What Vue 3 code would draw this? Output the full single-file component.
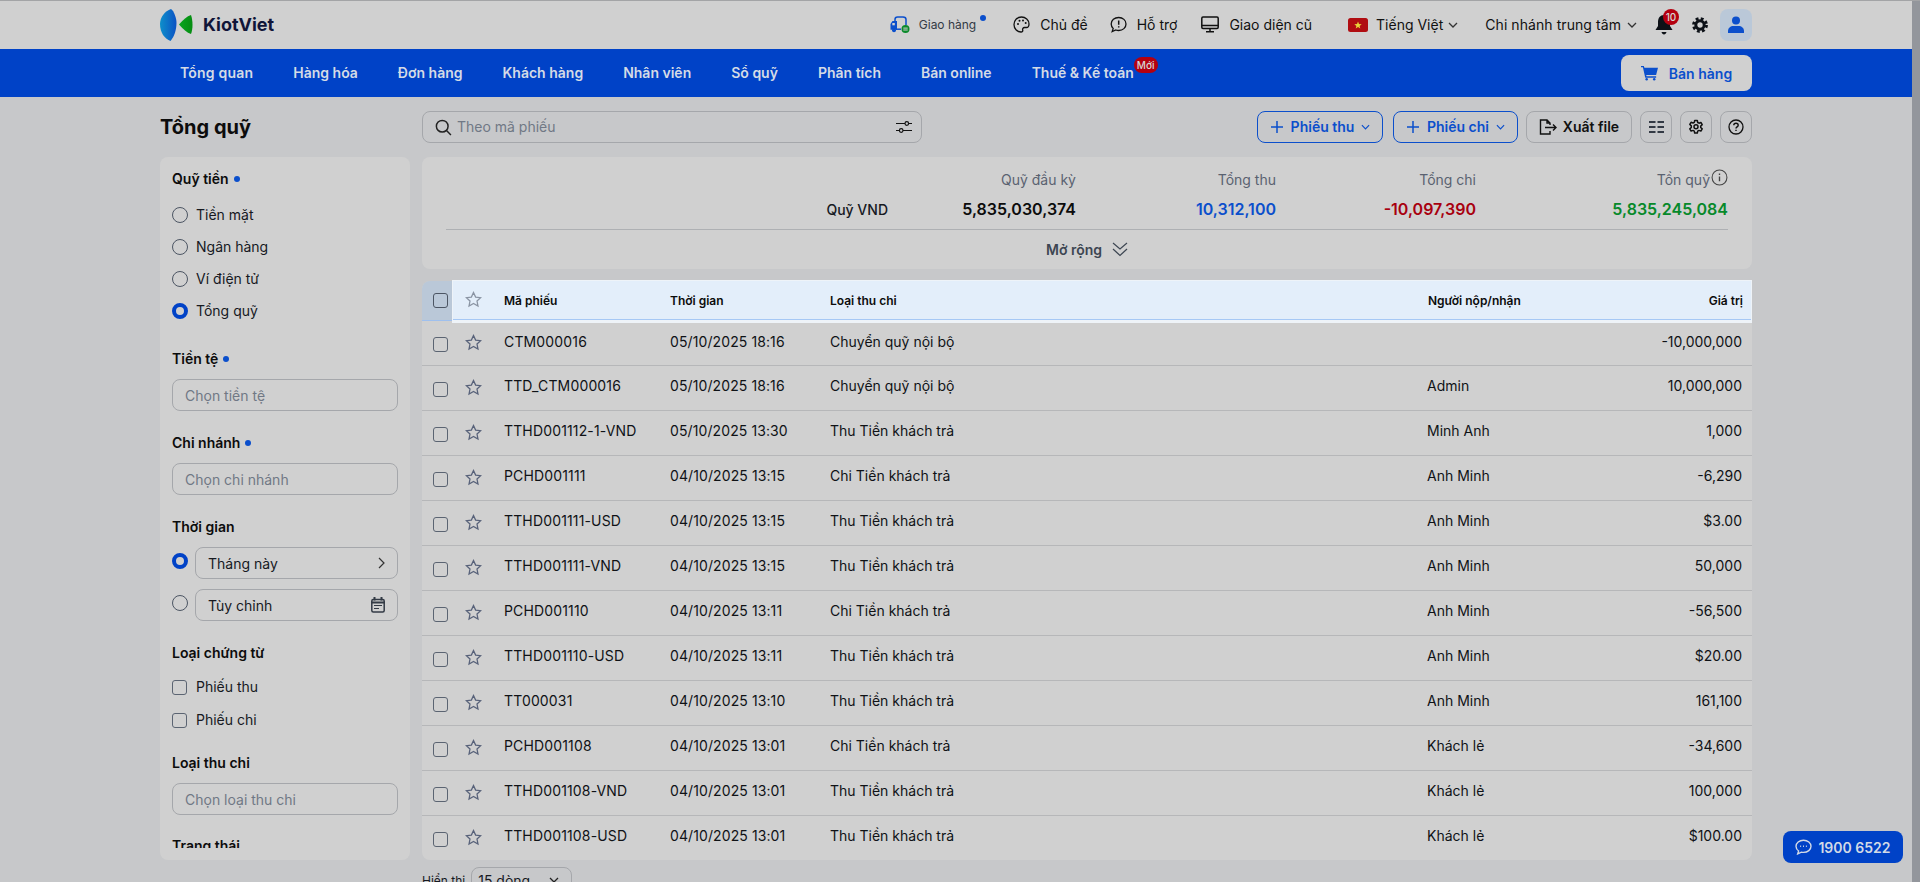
<script setup>
const nav = ['Tổng quan', 'Hàng hóa', 'Đơn hàng', 'Khách hàng', 'Nhân viên', 'Sổ quỹ', 'Phân tích', 'Bán online']
const rows = [
  ['CTM000016', '05/10/2025 18:16', 'Chuyển quỹ nội bộ', '', '-10,000,000'],
  ['TTD_CTM000016', '05/10/2025 18:16', 'Chuyển quỹ nội bộ', 'Admin', '10,000,000'],
  ['TTHD001112-1-VND', '05/10/2025 13:30', 'Thu Tiền khách trả', 'Minh Anh', '1,000'],
  ['PCHD001111', '04/10/2025 13:15', 'Chi Tiền khách trả', 'Anh Minh', '-6,290'],
  ['TTHD001111-USD', '04/10/2025 13:15', 'Thu Tiền khách trả', 'Anh Minh', '$3.00'],
  ['TTHD001111-VND', '04/10/2025 13:15', 'Thu Tiền khách trả', 'Anh Minh', '50,000'],
  ['PCHD001110', '04/10/2025 13:11', 'Chi Tiền khách trả', 'Anh Minh', '-56,500'],
  ['TTHD001110-USD', '04/10/2025 13:11', 'Thu Tiền khách trả', 'Anh Minh', '$20.00'],
  ['TT000031', '04/10/2025 13:10', 'Thu Tiền khách trả', 'Anh Minh', '161,100'],
  ['PCHD001108', '04/10/2025 13:01', 'Chi Tiền khách trả', 'Khách lẻ', '-34,600'],
  ['TTHD001108-VND', '04/10/2025 13:01', 'Thu Tiền khách trả', 'Khách lẻ', '100,000'],
  ['TTHD001108-USD', '04/10/2025 13:01', 'Thu Tiền khách trả', 'Khách lẻ', '$100.00'],
]
const funds = ['Tiền mặt', 'Ngân hàng', 'Ví điện tử', 'Tổng quỹ']
const starPath = 'M8 1.400l2 4.300 4.700.6-3.400 3.200.9 4.600L8 11.800l-4.200 2.300.9-4.600L1.300 6.300l4.700-.6z'
</script>

<template>
  <div class="page">
    <header class="top">
      <div class="wrap top-in">
        <div class="logo">
          <svg width="33" height="32" viewBox="0 0 33 32">
            <defs>
              <linearGradient id="lb" x1="0" x2="1" y1="0" y2="0">
                <stop offset="0" stop-color="#0e8fca" />
                <stop offset="1" stop-color="#0b52c4" />
              </linearGradient>
              <linearGradient id="lg" x1="0" x2="1" y1="0" y2="0">
                <stop offset="0" stop-color="#0aa51f" />
                <stop offset="1" stop-color="#068c12" />
              </linearGradient>
            </defs>
            <path d="M11 0C14 2 16.500 9 16.500 14C16.500 21 14 28 10.500 32C5 30 0 24 0 15C0 8 5 2 11 0Z" fill="url(#lb)" />
            <path d="M31 6C33 12 33 20 31 25C27 24 23 20 19 15.500C23 11 27 7 31 6Z" fill="url(#lg)" />
          </svg>
          <span class="logo-text">KiotViet</span>
        </div>
        <div class="top-right">
          <span class="ti ti-ship">
            <svg width="20" height="17" viewBox="0 0 20 17" fill="none">
              <path d="M5 6V3.500Q5 1 7.500 1H13Q16 1 16 3.500V9" stroke="#0b4fcc" stroke-width="1.500" />
              <path d="M6 13.200H11" stroke="#0b4fcc" stroke-width="1.500" />
              <path d="M2.500 5H7V13.800H.5V8Z" fill="#0b4fcc" />
              <rect x="2.300" y="7" width="2.500" height="2.300" fill="#d0d0d0" />
              <circle cx="4" cy="14.300" r="2" fill="#0b4fcc" />
              <circle cx="15.500" cy="13" r="4" fill="#0a8a2a" />
              <rect x="13.300" y="11.600" width="4.400" height="1" fill="#d0d0d0" />
              <rect x="13.300" y="13.500" width="4.400" height="1" fill="#d0d0d0" />
            </svg>
            <span class="ship-text">Giao hàng</span>
            <i class="dot ship-dot"></i>
          </span>
          <span class="ti ti-theme">
            <svg width="17" height="17" viewBox="0 0 17 17" fill="none" stroke="#111" stroke-width="1.300">
              <path d="M8.500 1C4 1 1 4.500 1 8.500S4 16 8 16c1.500 0 2-1 1.700-2-.4-1.300.3-2.500 1.800-2.500h2C15 11.500 16 10 16 8 16 4 12.500 1 8.500 1Z" />
              <circle cx="5" cy="8" r="1" fill="#111" stroke="none" />
              <circle cx="6.500" cy="4.800" r="1" fill="#111" stroke="none" />
              <circle cx="10" cy="4.500" r="1" fill="#111" stroke="none" />
              <circle cx="12.700" cy="7" r="1" fill="#111" stroke="none" />
            </svg>
            Chủ đề
          </span>
          <span class="ti ti-help">
            <svg width="17" height="17" viewBox="0 0 17 17" fill="none" stroke="#111" stroke-width="1.300">
              <path d="M8.700 1.500C4.500 1.500 1.200 4.200 1.200 8c0 1.800.8 3.300 2 4.400L2.200 15.500l3.600-1.500c.9.300 1.900.5 2.900.5 4.200 0 7.300-2.800 7.300-6.500s-3.100-6.500-7.300-6.500Z" />
              <path d="M8.700 4.500v4.200M8.700 10.300v1.300" stroke-width="1.500" />
            </svg>
            Hỗ trợ
          </span>
          <span class="ti ti-old">
            <svg width="18" height="17" viewBox="0 0 18 17" fill="none" stroke="#111" stroke-width="1.500">
              <rect x=".8" y="1" width="16.400" height="11.500" rx="1.200" />
              <path d="M.8 9.500h16.400M9 12.500v3M5 15.800h8" />
            </svg>
            Giao diện cũ
          </span>
          <span class="ti ti-lang">
            <svg class="flag" width="20" height="14" viewBox="0 0 20 14">
              <rect width="20" height="14" rx="2.500" fill="#b00d12" />
              <path d="M10 3.500l1 2.600 2.700.1-2.100 1.700.7 2.700L10 9.100l-2.300 1.500.7-2.700-2.100-1.700 2.700-.1z" fill="#e8d23a" />
            </svg>
            Tiếng Việt
            <svg class="chev" width="10" height="6" viewBox="0 0 10 6" fill="none" stroke="#333" stroke-width="1.300">
              <path d="M1 1l4 4 4-4" />
            </svg>
          </span>
          <span class="ti ti-branch">
            Chi nhánh trung tâm
            <svg class="chev" width="10" height="6" viewBox="0 0 10 6" fill="none" stroke="#333" stroke-width="1.300">
              <path d="M1 1l4 4 4-4" />
            </svg>
          </span>
          <span class="bell">
            <svg width="18" height="22" viewBox="0 0 18 22" fill="#0d1117">
              <path d="M9 1C5 1 3 4 3 8v4l-2.500 4h17L15 12V8c0-4-2-7-6-7Z" />
              <path d="M6.500 18h5c-.4 1.500-1.300 2.400-2.500 2.400S6.900 19.500 6.500 18Z" />
            </svg>
            <b class="bell-badge">10</b>
          </span>
          <svg class="gear" width="16" height="16" viewBox="0 0 16 16" fill="none" stroke="#0d1117">
            <circle cx="8" cy="8" r="4.200" stroke-width="3" />
            <circle cx="8" cy="8" r="6.500" stroke-width="2.800" stroke-dasharray="2.800 2.305" />
          </svg>
          <span class="avatar">
            <svg width="16" height="17" viewBox="0 0 16 17" fill="#0b4fcc">
              <circle cx="8" cy="4.500" r="4" />
              <path d="M0 17v-2c0-3 2.500-5 5.500-5h5c3 0 5.500 2 5.500 5v2Z" />
            </svg>
          </span>
        </div>
      </div>
    </header>

    <nav class="nav">
      <div class="wrap nav-in">
        <div class="nav-items">
          <a v-for="n in nav" :key="n" class="nav-item">{{ n }}</a>
          <a class="nav-item tax">Thuế &amp; Kế toán<span class="new">Mới</span></a>
        </div>
        <button class="sell">
          <svg width="17" height="16" viewBox="0 0 18 16" fill="#0b4fcc">
            <path d="M0 .5h3l.6 2H18l-2 7.500H5.500l.4 1.500H16V13H4.500L2 2H0Z" />
            <circle cx="6" cy="14.700" r="1.300" />
            <circle cx="14" cy="14.700" r="1.300" />
          </svg>
          Bán hàng
        </button>
      </div>
    </nav>

    <main class="wrap body">
      <div class="toolbar">
        <h1 class="title">Tổng quỹ</h1>
        <div class="search">
          <svg width="17" height="17" viewBox="0 0 16 16" fill="none" stroke="#222" stroke-width="1.400">
            <circle cx="6.800" cy="6.800" r="5.500" />
            <path d="M10.800 10.800L15 15" />
          </svg>
          <span class="search-ph">Theo mã phiếu</span>
          <svg class="tune" width="16" height="14" viewBox="0 0 16 14" fill="none" stroke="#111" stroke-width="1.200">
            <path d="M0 3.500h9M12.500 3.500H16M0 10.500h3.500M7 10.500h9" />
            <circle cx="10.800" cy="3.500" r="1.800" />
            <circle cx="5.200" cy="10.500" r="1.800" />
          </svg>
        </div>
        <div class="actions">
          <button class="btn btn-blue btn-thu">
            <svg width="14" height="14" viewBox="0 0 14 14" stroke="#0b4fcc" stroke-width="1.500"><path d="M7 1v12M1 7h12" /></svg>
            <span class="btn-t">Phiếu thu</span>
            <svg width="9" height="6" viewBox="0 0 10 6" fill="none" stroke="#0b4fcc" stroke-width="1.300"><path d="M1 1l4 4 4-4" /></svg>
          </button>
          <button class="btn btn-blue btn-chi">
            <svg width="14" height="14" viewBox="0 0 14 14" stroke="#0b4fcc" stroke-width="1.500"><path d="M7 1v12M1 7h12" /></svg>
            <span class="btn-t">Phiếu chi</span>
            <svg width="9" height="6" viewBox="0 0 10 6" fill="none" stroke="#0b4fcc" stroke-width="1.300"><path d="M1 1l4 4 4-4" /></svg>
          </button>
          <button class="btn btn-gray btn-xuat">
            <svg width="18" height="16" viewBox="0 0 18 16" fill="none" stroke="#111" stroke-width="1.400">
              <path d="M11 6V4L8 1H1.500v14H11v-3M8 1v3h3M6 8.500h11M14 5.500l3 3-3 3" />
            </svg>
            <span class="btn-t">Xuất file</span>
          </button>
          <button class="btn btn-gray btn-ic">
            <svg width="15" height="12" viewBox="0 0 15 12" fill="#333a45">
              <rect width="6.500" height="2" /><rect x="8.500" width="6.500" height="2" />
              <rect y="5" width="6.500" height="2" /><rect x="8.500" y="5" width="6.500" height="2" />
              <rect y="10" width="6.500" height="2" /><rect x="8.500" y="10" width="6.500" height="2" />
            </svg>
          </button>
          <button class="btn btn-gray btn-ic">
            <svg width="16" height="16" viewBox="0 0 16 16" fill="none" stroke="#111" stroke-width="1.500" stroke-linejoin="round">
              <path d="M6.700 1.500h2.600l.4 2 1.300.7 1.900-.7 1.300 2.200-1.500 1.400v1.400l1.500 1.400-1.300 2.200-1.900-.7-1.300.7-.4 2H6.700l-.4-2-1.300-.7-1.900.7-1.300-2.200 1.500-1.400V6.900L1.800 5.500 3.100 3.300l1.900.7 1.300-.7Z" />
              <circle cx="8" cy="7.700" r="2" />
            </svg>
          </button>
          <button class="btn btn-gray btn-ic">
            <svg width="16" height="16" viewBox="0 0 16 16" fill="none" stroke="#111" stroke-width="1.300">
              <circle cx="8" cy="8" r="7" />
              <path d="M5.800 6.200C5.800 5 6.800 4.200 8 4.200s2.200.8 2.200 2c0 1.700-2.200 1.600-2.200 3.300M8 10.800v1.300" stroke-width="1.400" />
            </svg>
          </button>
        </div>
      </div>

      <div class="columns">
        <aside class="side">
          <div class="side-scroll">
            <div class="label">Quỹ tiền <i class="dot"></i></div>
            <div class="radios">
              <label v-for="f in funds" :key="f" class="opt">
                <span class="radio" :class="{ on: f === 'Tổng quỹ' }"></span>{{ f }}
              </label>
            </div>

            <div class="label l-cur">Tiền tệ <i class="dot"></i></div>
            <div class="field ph">Chọn tiền tệ</div>

            <div class="label l-branch">Chi nhánh <i class="dot"></i></div>
            <div class="field ph">Chọn chi nhánh</div>

            <div class="label l-time">Thời gian</div>
            <div class="time-row t1">
              <span class="radio on"></span>
              <div class="field grow">
                Tháng này
                <svg width="7" height="12" viewBox="0 0 7 12" fill="none" stroke="#333" stroke-width="1.200"><path d="M1 1l5 5-5 5" /></svg>
              </div>
            </div>
            <div class="time-row t2">
              <span class="radio"></span>
              <div class="field grow">
                Tùy chỉnh
                <svg width="14" height="16" viewBox="0 0 14 16" fill="none" stroke="#333a45" stroke-width="1.500">
                  <rect x=".8" y="2.500" width="12.400" height="12.500" rx="1.500" />
                  <path d="M0 5.500h14M3.500 0v3.500M10.500 0v3.500" stroke-width="2" />
                  <path d="M3 8.500h8M3 11.500h5" stroke-width="1.100" />
                </svg>
              </div>
            </div>

            <div class="label l-doc">Loại chứng từ</div>
            <label class="opt c1"><span class="check"></span>Phiếu thu</label>
            <label class="opt c2"><span class="check"></span>Phiếu chi</label>

            <div class="label l-type">Loại thu chi</div>
            <div class="field ph">Chọn loại thu chi</div>

            <div class="label l-status">Trạng thái</div>
          </div>
        </aside>

        <section class="main">
          <div class="summary">
            <div class="sum-grid">
              <span></span>
              <span class="s-l">Quỹ đầu kỳ</span>
              <span class="s-l">Tổng thu</span>
              <span class="s-l">Tổng chi</span>
              <span class="s-l">Tồn quỹ
                <svg class="info" width="17" height="17" viewBox="0 0 16 16" fill="none" stroke="#444" stroke-width="1"><circle cx="8" cy="8" r="7" /><path d="M8 7v4.500M8 4.300v1.400" stroke-width="1.300" /></svg>
              </span>
              <span class="s-name">Quỹ VND</span>
              <span class="s-v">5,835,030,374</span>
              <span class="s-v c-blue">10,312,100</span>
              <span class="s-v c-red">-10,097,390</span>
              <span class="s-v c-green">5,835,245,084</span>
            </div>
            <div class="expand">
              Mở rộng
              <svg width="16" height="15" viewBox="0 0 16 15" fill="none" stroke="#3d4652" stroke-width="1.200"><path d="M1 1l7 6 7-6M1 7l7 6.500L15 7" /></svg>
            </div>
          </div>

          <div class="table">
            <div class="thead">
              <div class="th-check"><span class="check th-box"></span></div>
              <div class="th-rest">
                <svg class="star" width="17" height="17" viewBox="0 0 16 16" fill="none" stroke="#8a94a3" stroke-width="1.200"><path :d="starPath" /></svg>
                <span class="h-code">Mã phiếu</span>
                <span class="h-time">Thời gian</span>
                <span class="h-type">Loại thu chi</span>
                <span class="h-person">Người nộp/nhận</span>
                <span class="h-val">Giá trị</span>
              </div>
            </div>
            <div v-for="r in rows" :key="r[0]" class="row">
              <div class="cell-check"><span class="check row-box"></span></div>
              <svg class="star row-star" width="17" height="17" viewBox="0 0 16 16" fill="none" stroke="#58627a" stroke-width="1.200"><path :d="starPath" /></svg>
              <span class="r-code">{{ r[0] }}</span>
              <span class="r-time">{{ r[1] }}</span>
              <span class="r-type">{{ r[2] }}</span>
              <span class="r-person">{{ r[3] }}</span>
              <span class="r-val">{{ r[4] }}</span>
            </div>
          </div>

          <div class="pager">
            <span>Hiển thị</span>
            <span class="pg-select">
              15 dòng
              <svg width="10" height="6" viewBox="0 0 10 6" fill="none" stroke="#222" stroke-width="1.300"><path d="M1 1l4 4 4-4" /></svg>
            </span>
          </div>
        </section>
      </div>
    </main>

    <div class="topline"></div>
    <div class="scrollbar"></div>
    <button class="hotline">
      <svg width="17" height="16" viewBox="0 0 17 16" fill="none" stroke="#d3dae6" stroke-width="1.400">
        <path d="M8.500 1.200C4.300 1.200 1 3.900 1 7.300c0 1.900 1 3.600 2.600 4.700l-.9 2.900 3.700-1.700c.7.100 1.400.2 2.100.2 4.200 0 7.500-2.700 7.500-6.100S12.700 1.200 8.500 1.200Z" />
        <path d="M5.200 7.300h.9M8 7.300h.9M10.900 7.300h.9" stroke-width="1.600" />
      </svg>
      1900 6522
    </button>
  </div>
</template>

<style>
html, body { margin: 0; height: 100%; overflow: hidden; background: #c7c8ca; }
</style>

<style scoped>
.page {
  position: relative;
  width: 1920px;
  height: 882px;
  overflow: hidden;
  background: #c7c8ca;
  color: #0c0c0c;
  font-family: Inter, "Noto Sans", sans-serif;
  font-size: 14px;
}
.wrap { width: 1592px; margin-left: 160px; }
.topline { position: absolute; left: 0; top: 0; width: 100%; height: 1px; background: #a3a4a6; }
.scrollbar { position: absolute; right: 0; top: 1px; bottom: 0; width: 8px; background: #93969c; }

.top { height: 49px; background: #d0d0d0; }
.top-in { display: flex; align-items: center; justify-content: space-between; height: 100%; }
.logo { display: flex; align-items: center; gap: 10px; }
.logo-text { font-size: 18px; font-weight: 700; color: #101538; }
.top-right { display: flex; align-items: center; }
.ti { display: inline-flex; align-items: center; gap: 10px; white-space: nowrap; color: #111; }
.ti-ship { position: relative; gap: 9px; margin-right: 37px; }
.ship-text { font-size: 12px; color: #333a45; }
.ship-dot { position: absolute; right: -10px; top: -1px; }
.ti-theme { margin-right: 22px; }
.ti-help { margin-right: 24px; }
.ti-old { margin-right: 36px; }
.ti-lang { margin-right: 27px; gap: 8px; }
.ti-lang .chev { margin-left: -3px; }
.ti-branch { margin-right: 18px; gap: 6px; letter-spacing: .07px; }
.bell { position: relative; display: inline-flex; margin-right: 19px; }
.bell-badge {
  position: absolute; left: 8px; top: -5px;
  width: 16px; height: 16px; border-radius: 50%;
  background: #b40010; color: #d6d6d6;
  font-size: 10px; font-weight: 500; line-height: 16px; text-align: center;
}
.gear { margin-right: 12px; }
.avatar {
  width: 32px; height: 32px; border-radius: 8px; background: #bac8d8;
  display: inline-flex; align-items: center; justify-content: center;
}
.dot { display: inline-block; width: 6px; height: 6px; border-radius: 50%; background: #0b4fcc; }

.nav { height: 48px; background: #0042c7; }
.nav-in { display: flex; align-items: center; justify-content: space-between; height: 100%; }
.nav-items { display: flex; gap: 40px; padding-left: 20px; padding-bottom: 2px; }
.nav-item { color: #d4dbe6; font-weight: 600; white-space: nowrap; }
.nav-item:first-child { letter-spacing: .2px; }
.tax { position: relative; }
.new {
  position: absolute; left: 102px; top: -7px;
  width: 24px; height: 16px; border-radius: 8px;
  background: #b40010; color: #d6d6d6;
  font-size: 10px; font-weight: 500; line-height: 16px; text-align: center;
}
.sell {
  width: 131px; height: 36px; border: 0; border-radius: 8px;
  background: #d0d0d0; color: #0b4fcc;
  font: 600 14px Inter, sans-serif;
  display: flex; align-items: center; justify-content: center; gap: 11px;
}

.toolbar { display: flex; align-items: center; padding-top: 14px; height: 32px; }
.title { width: 262px; margin: 0; font-size: 20px; font-weight: 700; }
.search {
  width: 500px; height: 32px; box-sizing: border-box;
  border: 1px solid #a5a7ab; border-radius: 8px;
  display: flex; align-items: center; gap: 5px; padding: 0 9px 0 12px;
  color: #707885;
}
.search-ph { flex: 1; position: relative; top: -1px; }
.actions { margin-left: auto; display: flex; gap: 8px; }
.btn {
  height: 32px; box-sizing: border-box; background: transparent; border-radius: 8px;
  font: 600 14px Inter, sans-serif; display: inline-flex; align-items: center; justify-content: center;
  padding: 0; white-space: nowrap;
}
.btn-t { position: relative; top: -1px; }
.btn-blue { border: 1px solid #0b4fcc; color: #0b4fcc; gap: 7px; }
.btn-gray { border: 1px solid #a5a7ab; color: #111; gap: 6px; }
.btn-thu { width: 126px; margin-right: 2px; }
.btn-chi { width: 125px; }
.btn-xuat { width: 106px; }
.btn-ic { width: 32px; }

.columns { display: flex; gap: 12px; margin-top: 14px; align-items: flex-start; }
.side { width: 250px; height: 703px; border-radius: 8px; background: #d0d0d0; box-sizing: border-box; padding: 12px; flex: none; }
.side-scroll { height: 679px; overflow: hidden; }

.label { display: flex; align-items: center; gap: 5px; font-weight: 600; line-height: 20px; }
.radios { display: flex; flex-direction: column; gap: 12px; margin-top: 16px; }
.radios .opt { gap: 8px; }
.opt { display: flex; align-items: center; gap: 9px; line-height: 20px; color: #16191f; }
.radio { flex: none; width: 16px; height: 16px; box-sizing: border-box; border-radius: 50%; border: 1px solid #4c5563; }
.radio.on { border: 4px solid #0042c7; }
.check { flex: none; width: 15px; height: 15px; box-sizing: border-box; border-radius: 3px; border: 1.500px solid #5b6472; display: inline-block; }
.field {
  height: 32px; box-sizing: border-box; border: 1px solid #a5a7ab; border-radius: 8px;
  display: flex; align-items: center; justify-content: space-between; padding: 0 12px;
  color: #16191f;
}
.field.ph { color: #707885; }
.l-cur { margin-top: 28px; margin-bottom: 10px; }
.l-branch { margin-top: 22px; margin-bottom: 10px; }
.l-time { margin-top: 22px; margin-bottom: 10px; }
.time-row { display: flex; align-items: center; gap: 7px; }
.time-row .radio { margin-top: -4px; }
.t2 { margin-top: 10px; }
.grow { flex: 1; }
.l-doc { margin-top: 22px; margin-bottom: 14px; }
.c2 { margin-top: 13px; }
.l-type { margin-top: 23px; margin-bottom: 10px; }
.l-status { margin-top: 21px; }

.main { flex: 1; min-width: 0; }
.summary { height: 112px; border-radius: 8px; background: #d0d0d0; padding: 0 24px; box-sizing: border-box; }
.sum-grid {
  display: grid;
  grid-template-columns: 442px 188px 200px 200px 252px;
  grid-template-rows: 42px 20px;
  align-content: start;
  height: 72px;
  border-bottom: 1px solid #aeb0b3;
  align-items: center;
  justify-items: end;
  width: 1282px;
}
.s-l { color: #5a6270; display: inline-flex; align-items: center; gap: 1px; position: relative; top: 1px; }
.info { margin-bottom: 3px; }
.s-name { font-weight: 500; color: #16191f; }
.s-v { font-size: 16px; font-weight: 600; color: #0c0c0c; }
.c-blue { color: #0b4fcc; }
.c-red { color: #a8000f; }
.c-green { color: #07892a; }
.expand {
  display: flex; align-items: center; justify-content: center; gap: 10px;
  height: 39px; font-weight: 600; font-size: 14px; color: #3d4652;
}

.table { margin-top: 12px; height: 579px; border-radius: 8px; background: #d0d0d0; }
.thead { display: flex; height: 42px; }
.th-check {
  width: 30px; background: #bac8d8; border-top-left-radius: 8px;
  display: flex; align-items: center; justify-content: center; padding-left: 6px;
  box-sizing: border-box; border-bottom: 1px solid #9fc0ee; height: 40px;
}
.th-box { border-color: #4c5563; }
.th-rest {
  flex: 1; position: relative; display: flex; align-items: center;
  background: #e3eefa; box-sizing: border-box; height: 43px; margin-top: -1px;
  border: 1px solid #eef3f8; border-bottom-width: 3px;
  box-shadow: inset 0 -1px 0 #a6c8f5;
  font-size: 12px; font-weight: 600;
}
.star { flex: none; }
.thead .star { margin-left: 12px; margin-bottom: 3px; }
.h-code { margin-left: 22px; width: 166px; }
.h-time { width: 160px; }
.h-type { width: 598px; }
.h-person { flex: 1; }
.h-val { margin-right: 8px; }
.row {
  display: flex; align-items: center; height: 45px; box-sizing: border-box;
  border-bottom: 1px solid #b6b7b9;
  padding-bottom: 6px;
  color: #0f1216;
}
.thead + .row { height: 43px; }
.row:last-child { border-bottom: 0; height: 44px; }
.cell-check { width: 30px; display: flex; justify-content: center; padding: 8px 0 0 6px; box-sizing: border-box; }
.row-star { margin-left: 13px; margin-top: 4px; }
.thead + .row .cell-check { padding-top: 6px; }
.thead + .row .row-star { margin-top: 2px; }
.r-code { margin-left: 22px; width: 166px; letter-spacing: .15px; }
.r-time { width: 160px; letter-spacing: .1px; }
.r-type { width: 597px; }
.r-person { flex: 1; }
.r-val { margin-right: 10px; }
.pager { display: flex; align-items: center; gap: 6px; margin-top: 7px; font-size: 12px; color: #16191f; }
.pg-select {
  width: 101px; height: 26px; box-sizing: border-box; font-size: 14px;
  border: 1px solid #a5a7ab; border-radius: 8px;
  display: flex; align-items: center; justify-content: space-between; padding: 0 12px 0 6px;
}
.hotline {
  position: absolute; left: 1783px; top: 831px;
  width: 120px; height: 32px; border: 0; border-radius: 8px;
  background: #0042c7; color: #d3dae6;
  font: 600 14px Inter, sans-serif;
  display: flex; align-items: center; justify-content: center; gap: 6px;
}
</style>
